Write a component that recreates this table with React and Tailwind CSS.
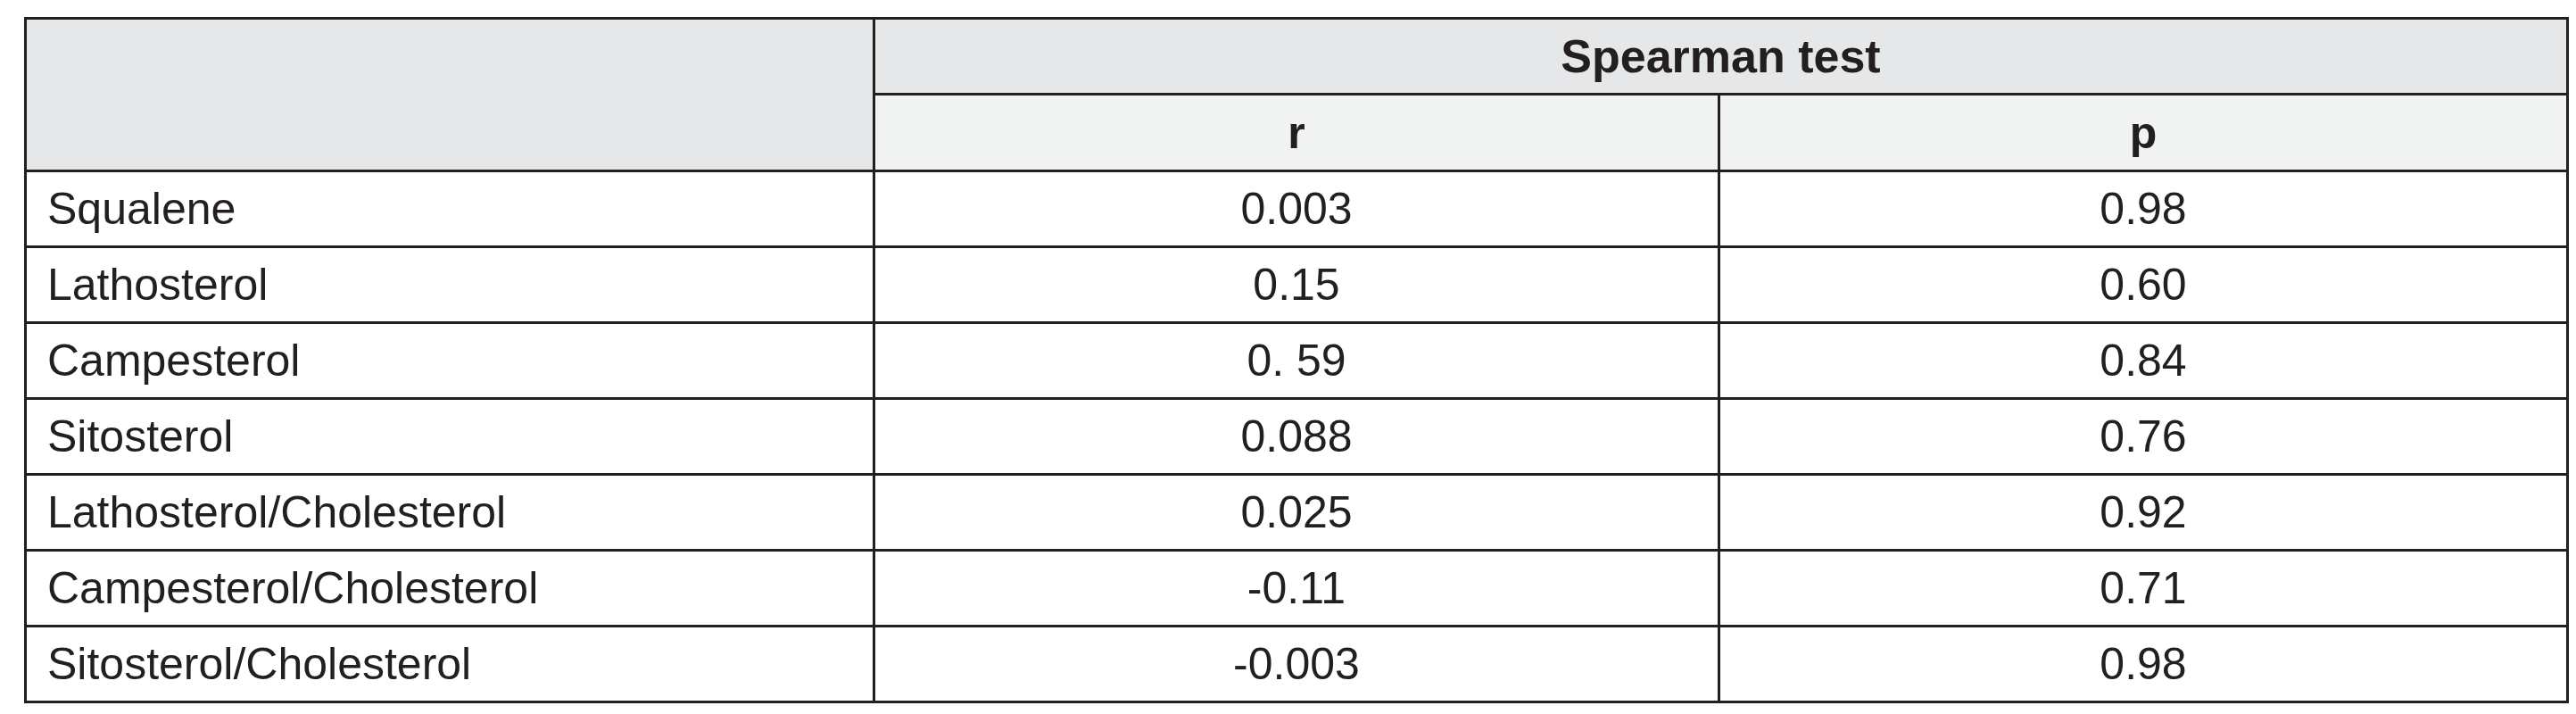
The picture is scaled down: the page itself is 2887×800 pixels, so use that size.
import React from "react";

const rows = [
  ["Squalene", "0.003", "0.98"],
  ["Lathosterol", "0.15", "0.60"],
  ["Campesterol", "0. 59", "0.84"],
  ["Sitosterol", "0.088", "0.76"],
  ["Lathosterol/Cholesterol", "0.025", "0.92"],
  ["Campesterol/Cholesterol", "-0.11", "0.71"],
  ["Sitosterol/Cholesterol", "-0.003", "0.98"],
];

export default function App() {
  return (
    <div className="w-[2887px] h-[800px] bg-white pt-[19px] pl-[27px] font-['Liberation_Sans',Arial,sans-serif] text-[#231f20]">
      <div className="w-[2852px] border-[3px] border-[#231f20] grid grid-cols-[948px_947px_951px]">
        {/* header */}
        <div className="row-span-2 bg-[#e6e7e8]" />
        <div className="col-span-2 h-[82px] border-l-[3px] border-[#231f20] bg-[#e6e7e8] flex items-center justify-center text-[52px] font-bold leading-none">
          Spearman test
        </div>
        <div className="h-[86px] border-l-[3px] border-t-[3px] border-[#231f20] bg-[#f1f2f2] flex items-center justify-center text-[50px] font-bold leading-none">
          r
        </div>
        <div className="h-[86px] border-l-[3px] border-t-[3px] border-[#231f20] bg-[#f1f2f2] flex items-center justify-center text-[50px] font-bold leading-none">
          p
        </div>

        {/* body */}
        {rows.map(([name, r, p]) => (
          <React.Fragment key={name}>
            <div className="h-[85px] border-t-[3px] border-[#231f20] flex items-center pl-[23px] text-[50px] leading-none">
              {name}
            </div>
            <div className="h-[85px] border-t-[3px] border-l-[3px] border-[#231f20] flex items-center justify-center text-[50px] leading-none">
              {r}
            </div>
            <div className="h-[85px] border-t-[3px] border-l-[3px] border-[#231f20] flex items-center justify-center text-[50px] leading-none">
              {p}
            </div>
          </React.Fragment>
        ))}
      </div>
    </div>
  );
}
